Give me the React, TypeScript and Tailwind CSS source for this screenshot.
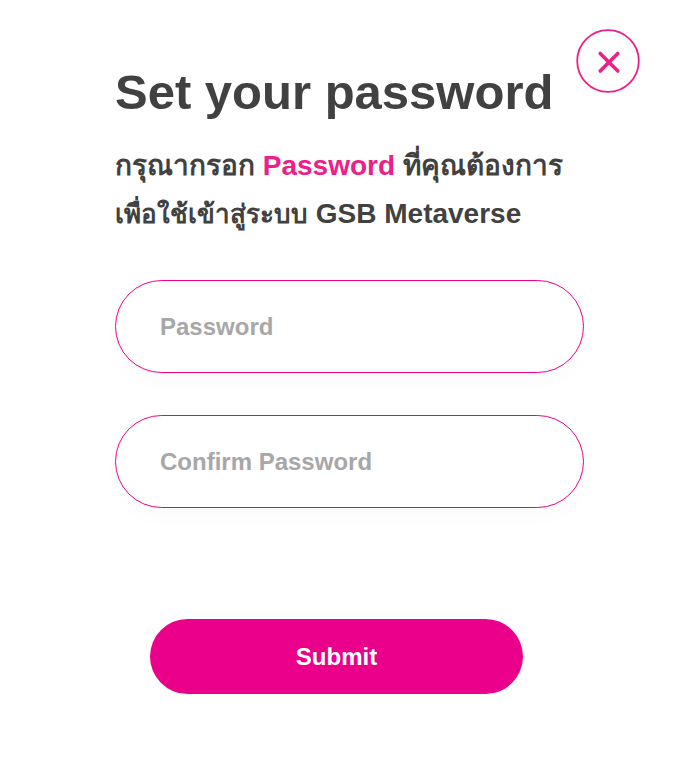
export default function App() {
  const field =
    'block h-[93px] w-full rounded-full border border-[#eb008b] bg-white px-11 text-2xl font-bold text-[#414042] shadow-[0_10px_20px_rgba(0,0,0,0.015)] outline-none placeholder:text-[#a7a7a7] placeholder:opacity-100';
  return (
    <main className="relative min-h-screen bg-white pt-16 pr-[89px] pb-[89px] pl-[115px] font-['Liberation_Sans','Noto_Sans',sans-serif] font-bold text-[#414141]">
      <button type="button" aria-label="Close" className="absolute top-[29px] right-[33px] size-16 text-[#ec2088]">
        <svg viewBox="0 0 64 64" className="size-16" fill="none" stroke="currentColor">
          <circle cx="32" cy="32" r="30.8" strokeWidth="1.8" />
          <path d="M24.2 24.5 41.8 42M41.8 24.5 24.2 42" strokeWidth="3.6" strokeLinecap="round" />
        </svg>
      </button>
      <h1 className="text-[49px] leading-14 whitespace-nowrap">Set your password</h1>
      <p className="mt-[22px] text-[28px] leading-12 whitespace-nowrap">
        กรุณากรอก <span className="text-[#ec2088]">Password</span> ที่คุณต้องการ
        <br />
        <span className="text-[26px]">เพื่อใช้เข้าสู่ระบบ</span> GSB Metaverse
      </p>
      <form className="mt-[42px]" onSubmit={(e) => e.preventDefault()}>
        <input type="password" aria-label="Password" placeholder="Password" className={field} />
        <input type="password" aria-label="Confirm Password" placeholder="Confirm Password" className={`${field} mt-[42px]`} />
        <div className="mt-[111px] pr-[61px] pl-[35px]">
          <button type="submit" className="h-[75px] w-full rounded-full bg-[#eb008b] text-2xl text-white">
            Submit
          </button>
        </div>
      </form>
    </main>
  );
}
